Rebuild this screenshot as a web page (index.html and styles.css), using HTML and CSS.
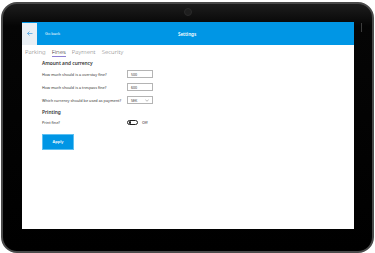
FILE: index.html
```html
<!DOCTYPE html>
<html lang="en">
<head>
    <meta charset="UTF-8">
    <meta name="viewport" content="width=device-width, initial-scale=1.0">
    <title>Settings</title>
    <link rel="stylesheet" href="styles.css">
</head>
<body>

    <div class="tablet">
        <div class="camera"></div>
        <div class="notch"></div>
        <div class="side-btn"></div>

        <div class="screen">
            <div class="header">
                <button class="back">
                    <svg width="6" height="5" viewBox="0 0 6 5">
                        <path d="M2.5 0.5 L0.5 2.5 L2.5 4.5 M0.5 2.5 H5.5" fill="none" stroke="#3a9be0" stroke-width="0.7"/>
                    </svg>
                </button>
                <span class="go-back">Go back</span>
                <h1 class="title">Settings</h1>
            </div>

            <div class="tabs">
                <span class="tab">Parking</span>
                <span class="tab active">Fines</span>
                <span class="tab">Payment</span>
                <span class="tab">Security</span>
            </div>

            <div class="content">
                <h2 class="section">Amount and currency</h2>
                <div class="row">
                    <label>How much should is a overstay fine?</label>
                    <div class="field">500</div>
                </div>
                <div class="row">
                    <label>How much should is a trespass fine?</label>
                    <div class="field">600</div>
                </div>
                <div class="row">
                    <label>Which currency should be used as payment?</label>
                    <div class="field select">SEK
                        <svg width="4" height="3" viewBox="0 0 4 3">
                            <path d="M0.4 0.8 L2 2.2 L3.6 0.8" fill="none" stroke="#777" stroke-width="0.5"/>
                        </svg>
                    </div>
                </div>

                <h2 class="section printing">Printing</h2>
                <div class="row toggle-row">
                    <label>Print fine?</label>
                    <div class="toggle"><span class="knob"></span></div>
                    <span class="off">Off</span>
                </div>

                <button class="apply">Apply</button>
            </div>
        </div>
    </div>

</body>
</html>
```

FILE: styles.css
```css
*{
    margin: 0;
    padding: 0;
    box-sizing: border-box;
}

body{
    background-color: #fff;
    font-family: "Noto Sans", "Open Sans", sans-serif;
}

.tablet{
    position: relative;
    width: 373px;
    height: 251px;
    margin: 2px 0 0 1px;
    padding: 18px 18px 22px 19px;
    border: 2px solid #4a4a4a;
    border-radius: 16px;
    background: linear-gradient(#1d1d1d, #050505 22px, #000);
}

.camera{
    position: absolute;
    left: 181px;
    top: 4px;
    width: 8px;
    height: 8px;
    border-radius: 50%;
    background-color: #1e1e1e;
    border: 1px solid #2a2a2a;
}

.notch{
    position: absolute;
    left: 181px;
    top: 18px;
    width: 8px;
    height: 3px;
    background-color: #1a1a1a;
}

.side-btn{
    position: absolute;
    left: 358px;
    top: 19px;
    width: 1px;
    height: 9px;
    background-color: #3c3c3c;
}

.screen{
    width: 332px;
    height: 207px;
    background-color: #fff;
}

.header{
    position: relative;
    display: flex;
    align-items: center;
    height: 23px;
    background-color: #0096e5;
    color: #fff;
}

.back{
    display: flex;
    align-items: center;
    justify-content: center;
    width: 15px;
    height: 22px;
    border: none;
    background-color: #e9eff4;
}

.go-back{
    margin-left: 8px;
    font-size: 4px;
}

.title{
    flex: 1;
    margin-right: 40px;
    text-align: center;
    font-size: 4.6px;
    font-weight: 600;
}

.tabs{
    display: flex;
    gap: 6px;
    padding: 3px 0 0 3px;
    height: 13px;
}

.tab{
    font-size: 6px;
    line-height: 8px;
    color: #7f7f7f;
    font-weight: 300;
}

.tab.active{
    color: #333;
    border-bottom: 1px solid #8d7fd3;
    height: 9px;
}

.content{
    padding: 2px 0 0 20px;
}

.section{
    font-size: 4.8px;
    font-weight: 600;
    color: #333;
    line-height: 7px;
    margin-bottom: 3px;
}

.row{
    display: flex;
    align-items: center;
    height: 8px;
    margin-bottom: 5px;
}

.row label{
    width: 85px;
    font-size: 3.8px;
    color: #333;
}

.field{
    display: flex;
    align-items: center;
    justify-content: space-between;
    width: 26px;
    height: 8px;
    padding: 0 3px 0 3px;
    border: 1px solid #b4b4b4;
    font-size: 3.6px;
    color: #333;
}

.printing{
    margin-top: 4px;
    margin-bottom: 2px;
}

.toggle-row{
    margin-bottom: 0;
}

.toggle{
    width: 11px;
    height: 5px;
    border: 0.7px solid #222;
    border-radius: 3px;
    padding: 0.8px;
}

.knob{
    display: block;
    width: 2.6px;
    height: 2.6px;
    border-radius: 50%;
    background-color: #222;
}

.off{
    margin-left: 4px;
    font-size: 3.8px;
    color: #333;
}

.apply{
    margin-top: 7px;
    width: 32px;
    height: 16px;
    border: 1px solid #5cc0f2;
    background-color: #0096e5;
    color: #fff;
    font-family: "Noto Sans", sans-serif;
    font-size: 4px;
    font-weight: 600;
}
```
